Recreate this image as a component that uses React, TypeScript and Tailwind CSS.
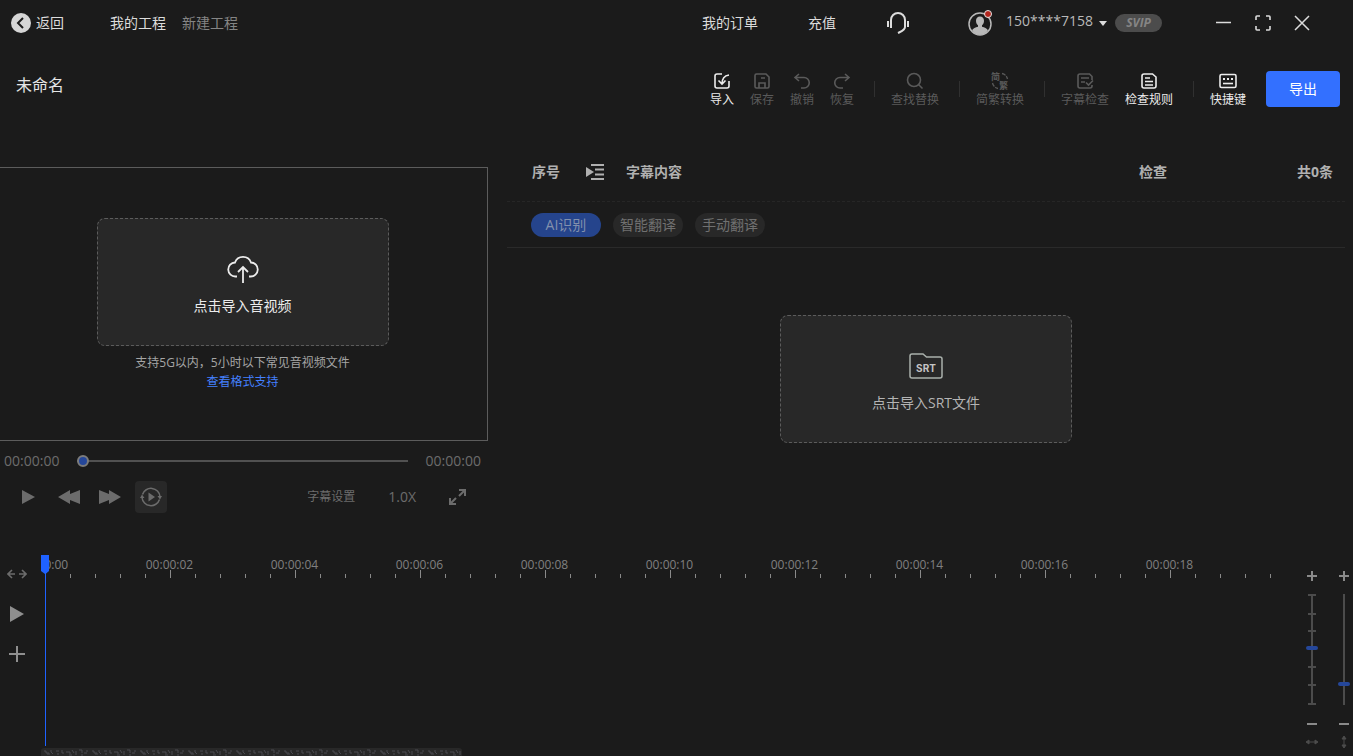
import type { ReactNode } from 'react'
import clsx from 'clsx'

type ToolProps = {
  label: string
  icon: ReactNode
  width?: string
  active?: boolean
}

function Tool({ label, icon, width = 'w-16', active = false }: ToolProps) {
  return (
    <button
      type="button"
      disabled={!active}
      className={clsx(
        'flex flex-col items-center gap-px pt-[3px] text-xs leading-[18px]',
        width,
        active ? 'text-[#ececec]' : 'text-[#5a5a5a]'
      )}
    >
      <svg className="overflow-visible" width="18" height="18" viewBox="0 0 18 18" fill="none" stroke="currentColor" strokeWidth="1.6">
        {icon}
      </svg>
      <span>{label}</span>
    </button>
  )
}

function Divider() {
  return <div className="ml-3 mr-2 h-4 w-px bg-[#303030]" />
}

const importIcon = (
  <>
    <path d="M9 2H4a2 2 0 0 0-2 2v10a2 2 0 0 0 2 2h10a2 2 0 0 0 2-2V9" />
    <path d="M16 3c-4 .5-7 3-7 9M5.500 8.500 9 12l3.500-3.500" />
  </>
)

const saveIcon = (
  <>
    <path d="M3.500 2H13l3 3v9.500a1.500 1.500 0 0 1-1.500 1.500h-11A1.500 1.500 0 0 1 2 14.500v-11A1.500 1.500 0 0 1 3.500 2Z" />
    <path d="M6 16v-5h6v5M8 6h4" />
  </>
)

const undoIcon = <path d="M6 2 2 5.500 6 9M2 5.500h9a5 5 0 0 1 0 10.500H8" />
const redoIcon = <path d="m12 2 4 3.500L12 9M16 5.500H7A5 5 0 0 0 7 16h3" />

const searchIcon = (
  <>
    <circle cx="8" cy="8" r="6.500" />
    <path d="m12.500 12.500 4 4" />
  </>
)

const convertIcon = (
  <>
    <g fill="currentColor" stroke="none" fontSize="9" fontWeight="700" fontFamily="Noto Sans CJK SC, sans-serif">
      <text x="0" y="8">简</text>
      <text x="8" y="17">繁</text>
    </g>
    <path d="M11 1.500a7 7 0 0 1 5.500 5.500M1.500 11A7 7 0 0 0 7 16.500" strokeDasharray="4 1" strokeWidth="1.300" />
  </>
)

const checkIcon = (
  <>
    <path d="M16 8V4.500L13.500 2H4a2 2 0 0 0-2 2v10a2 2 0 0 0 2 2h10a2 2 0 0 0 2-2v-1" />
    <path d="M5 6h8M5 10h4M10 10.500l2.500 2.500L17 8.500" />
  </>
)

const ruleIcon = (
  <>
    <path d="M12.500 2H4a2 2 0 0 0-2 2v10a2 2 0 0 0 2 2h10a2 2 0 0 0 2-2V5Z" />
    <path d="M5 6h5M5 9.500h8M5 13h8" />
  </>
)

const keyboardIcon = (
  <>
    <rect x="1" y="2.500" width="16" height="13" rx="1.500" />
    <path d="M4 7h2M8 7h2M12 7h2" strokeWidth="2" />
    <path d="M4 11.500h10" />
  </>
)

function Header() {
  return (
    <header className="flex h-[46px] items-center pl-[11px] pr-[43px] text-sm text-[#dcdcdc]">
      <button type="button" className="flex items-center gap-[5px]">
        <svg width="20" height="20" viewBox="0 0 20 20">
          <circle cx="10" cy="10" r="10" fill="#d6d6d6" />
          <path d="m12 5-5 5 5 5" fill="none" stroke="#1b1b1b" strokeWidth="2" />
        </svg>
        返回
      </button>
      <nav className="ml-[46px] flex gap-4">
        <a href="#projects">我的工程</a>
        <a href="#new" className="text-[#858585]">新建工程</a>
      </nav>

      <nav className="ml-auto flex items-center gap-[50px]">
        <a href="#orders">我的订单</a>
        <a href="#recharge">充值</a>
        <button type="button" aria-label="客服">
          <svg width="24" height="24" viewBox="0 0 24 24" fill="none" stroke="currentColor" strokeWidth="2">
            <path d="M5 17V9a7 7 0 0 1 14 0v7c0 3-3 4-7 6" />
            <path d="M2 10v6M22 10v6" />
          </svg>
        </button>
      </nav>

      <button type="button" className="ml-[58px] flex items-center text-[#b9b9b9]">
        <svg width="26" height="26" viewBox="0 0 26 26">
          <circle cx="12" cy="14" r="11" fill="none" stroke="#b8b8b8" strokeWidth="1.500" />
          <path
            d="M12 6.500c-2.500 0-4 1.800-4 4.200 0 2 .8 3.600 2 4.500v1.600c-2.600.8-4.800 1.600-6 3.400A10.500 10.500 0 0 0 12 25a10.500 10.500 0 0 0 8-4.800c-1.200-1.800-3.400-2.600-6-3.400v-1.600c1.200-.9 2-2.500 2-4.500 0-2.400-1.500-4.200-4-4.200Z"
            fill="#b8b8b8"
          />
          <circle cx="20" cy="4" r="3.500" fill="#b3261e" stroke="#e4e4e4" />
        </svg>
        <span className="ml-3 pb-1">150****7158</span>
        <svg className="ml-[6px]" width="8" height="6" viewBox="0 0 8 6" fill="#dcdcdc">
          <path d="M0 1h8L4 6Z" />
        </svg>
      </button>
      <span className="ml-2 flex h-[18px] w-[47px] items-center justify-center rounded-full bg-[#4c4c4c] text-xs font-bold italic text-[#858585]">
        SVIP
      </span>

      <div className="ml-[54px] flex items-center gap-[23px]">
        <button type="button" aria-label="最小化">
          <svg width="16" height="16" viewBox="0 0 16 16" stroke="currentColor" strokeWidth="1.500">
            <path d="M0 7.500h15" />
          </svg>
        </button>
        <button type="button" aria-label="全屏">
          <svg width="16" height="16" viewBox="0 0 16 16" fill="none" stroke="currentColor" strokeWidth="1.600">
            <path d="M1 5V2a1 1 0 0 1 1-1h3M11 1h3a1 1 0 0 1 1 1v3M15 11v3a1 1 0 0 1-1 1h-3M5 15H2a1 1 0 0 1-1-1v-3" />
          </svg>
        </button>
        <button type="button" aria-label="关闭">
          <svg width="16" height="16" viewBox="0 0 16 16" stroke="currentColor" strokeWidth="1.500">
            <path d="m1 1 14 14M15 1 1 15" />
          </svg>
        </button>
      </div>
    </header>
  )
}

function Toolbar() {
  return (
    <div className="flex h-[86px] items-center pl-4 pr-[13px]">
      <h1 className="pb-2 text-base text-[#e6e6e6]">未命名</h1>
      <div className="ml-auto flex items-center">
        <Tool label="导入" icon={importIcon} width="w-10" active />
        <Tool label="保存" icon={saveIcon} width="w-10" />
        <Tool label="撤销" icon={undoIcon} width="w-10" />
        <Tool label="恢复" icon={redoIcon} width="w-10" />
        <Divider />
        <Tool label="查找替换" icon={searchIcon} />
        <Divider />
        <Tool label="简繁转换" icon={convertIcon} />
        <Divider />
        <Tool label="字幕检查" icon={checkIcon} />
        <Tool label="检查规则" icon={ruleIcon} active />
        <Divider />
        <Tool label="快捷键" icon={keyboardIcon} width="w-[52px]" active />
      </div>
      <button type="button" className="ml-3 h-9 w-[74px] rounded bg-[#3370ff] text-sm text-white">
        导出
      </button>
    </div>
  )
}

function Player() {
  return (
    <section className="w-[488px] shrink-0 pt-[35px] text-[#6c6c6c]">
      <div className="flex h-[274px] flex-col items-center border border-l-0 border-[#5c5c5c] pr-[2px] pt-[50px]">
        <button
          type="button"
          className="flex h-32 w-[292px] flex-col items-center justify-center gap-3 rounded-lg border border-dashed border-[#5c5c5c] bg-[#282828] pt-1 text-sm text-[#ececec]"
        >
          <svg width="32" height="32" viewBox="0 0 32 32" fill="none" stroke="currentColor" strokeWidth="1.800">
            <path d="M10 24.500H8.500A6.500 6.500 0 0 1 8 10.500 8.500 8.500 0 0 1 24 10.500 6.500 6.500 0 0 1 23.500 24.500H22" />
            <path d="M16 31V15M11 20l5-5 5 5" />
          </svg>
          点击导入音视频
        </button>
        <p className="mt-[7px] text-xs leading-5 text-[#a5a5a5]">支持5G以内，5小时以下常见音视频文件</p>
        <a href="#formats" className="text-xs leading-[18px] text-[#4480ff]">查看格式支持</a>
      </div>

      <div className="flex h-10 items-center gap-[18px] pl-1 pr-[7px] text-sm">
        <span>00:00:00</span>
        <input
          type="range"
          aria-label="播放进度"
          defaultValue={0}
          className="h-3 min-w-0 flex-1 appearance-none bg-transparent [&::-webkit-slider-runnable-track]:h-[2px] [&::-webkit-slider-runnable-track]:bg-[#515151] [&::-webkit-slider-thumb]:-mt-[5px] [&::-webkit-slider-thumb]:size-3 [&::-webkit-slider-thumb]:appearance-none [&::-webkit-slider-thumb]:rounded-full [&::-webkit-slider-thumb]:border-2 [&::-webkit-slider-thumb]:border-[#7c7c7c] [&::-webkit-slider-thumb]:bg-[#25479a]"
        />
        <span>00:00:00</span>
      </div>

      <div className="flex items-center gap-[9px] pl-3 pr-[22px]">
        <button type="button" aria-label="播放" className="flex size-8 items-center justify-center">
          <svg width="13" height="14" viewBox="0 0 13 14" fill="currentColor"><path d="M0 0v14l13-7Z" /></svg>
        </button>
        <button type="button" aria-label="快退" className="flex size-8 items-center justify-center">
          <svg width="22" height="14" viewBox="0 0 22 14" fill="currentColor"><path d="M12 0v4L22 0v14l-10-4v4L0 7Z" /></svg>
        </button>
        <button type="button" aria-label="快进" className="flex size-8 items-center justify-center">
          <svg width="22" height="14" viewBox="0 0 22 14" fill="currentColor"><path d="M10 0v4L0 0v14l10-4v4l12-7Z" /></svg>
        </button>
        <button type="button" aria-label="循环播放" className="flex size-8 items-center justify-center rounded bg-[#282828]">
          <svg width="22" height="22" viewBox="0 0 22 22" fill="currentColor">
            <path d="M2.500 8.500a9 9 0 0 1 17.500 2M19.500 13.500a9 9 0 0 1-17.500-2" fill="none" stroke="currentColor" strokeWidth="1.500" />
            <path d="M17.500 10H22l-2 3.500ZM0 12h4.500L2 8.500ZM8.500 6.500v9L15 11Z" />
          </svg>
        </button>
        <div className="ml-auto flex items-center gap-[33px]">
          <button type="button" className="text-xs">字幕设置</button>
          <button type="button" className="text-sm">1.0X</button>
          <button type="button" aria-label="全屏播放">
            <svg width="17" height="16" viewBox="0 0 17 16" fill="none" stroke="currentColor" strokeWidth="2">
              <path d="M10 1h6v6M16 1l-6 6M7 15H1V9M1 15l6-6" />
            </svg>
          </button>
        </div>
      </div>
    </section>
  )
}

function SubtitlePanel() {
  return (
    <section className="ml-[19px] mr-2 flex-1 pt-[10px]">
      <div className="flex h-[60px] items-center border-b border-dashed border-[#262626] pl-[25px] pr-3 text-sm font-bold text-[#b0b0b0]">
        <span>序号</span>
        <button type="button" aria-label="展开列表" className="ml-[26px]">
          <svg width="18" height="18" viewBox="0 0 18 18" fill="currentColor">
            <path d="M0 4v10L8 9Z" />
            <path d="M5 2h13M9 6.500h9M9 11.500h9M5 16h13" stroke="currentColor" strokeWidth="2" />
          </svg>
        </button>
        <span className="ml-[22px]">字幕内容</span>
        <span className="ml-auto mr-[130px]">检查</span>
        <span>共0条</span>
      </div>
      <div className="flex h-[46px] items-center gap-3 border-b border-[#2a2a2a] pl-6 text-sm text-[#707070]">
        <button type="button" className="h-6 w-[70px] rounded-full bg-[#25448c] text-[#8290ad]">AI识别</button>
        <button type="button" className="h-6 w-[70px] rounded-full bg-[#282828]">智能翻译</button>
        <button type="button" className="h-6 w-[70px] rounded-full bg-[#282828]">手动翻译</button>
      </div>
      <div className="flex justify-center pt-[67px]">
        <button
          type="button"
          className="flex h-32 w-[292px] flex-col items-center justify-center gap-[14px] rounded-lg border border-dashed border-[#5c5c5c] bg-[#282828] pt-2 text-sm text-[#b4b4b4]"
        >
          <svg width="34" height="26" viewBox="0 0 34 26">
            <path
              d="M3 1h11l3.500 3H31a2 2 0 0 1 2 2v17a2 2 0 0 1-2 2H3a2 2 0 0 1-2-2V3a2 2 0 0 1 2-2Z"
              fill="none"
              stroke="#a9b0ab"
              strokeWidth="1.500"
            />
            <text x="17" y="19" textAnchor="middle" fontSize="10" fontWeight="700" fontFamily="Inter, sans-serif" fill="#c4c4c4">
              SRT
            </text>
          </svg>
          点击导入SRT文件
        </button>
      </div>
    </section>
  )
}

const seconds = ['00', '02', '04', '06', '08', '10', '12', '14', '16', '18']
const ticks = Array.from({ length: 50 }, (_, i) => i)

function ZoomSlider({ label, value, marks, icon }: { label: string; value: number; marks?: boolean; icon: ReactNode }) {
  return (
    <div className="flex w-4 flex-col items-center text-[#8a8a8a]">
      <button type="button" aria-label={`${label}放大`}>
        <svg width="16" height="16" viewBox="0 0 16 16" stroke="currentColor" strokeWidth="2">
          <path d="M3 8h10M8 3v10" />
        </svg>
      </button>
      <div className="mt-[10px] grid justify-items-center">
        <svg className="[grid-area:1/1]" width="12" height="111" viewBox="0 0 12 111" stroke="#4c4c4c" strokeWidth="2">
          <path d="M6 0v111" />
          {marks && <path d="M2 1h8M2 20h8M2 37h8M2 73h8M2 91h8M2 110h8" />}
        </svg>
        <input
          type="range"
          aria-label={label}
          defaultValue={value}
          className="h-[111px] w-3 appearance-none bg-transparent [direction:rtl] [grid-area:1/1] [writing-mode:vertical-lr] [&::-webkit-slider-thumb]:h-1 [&::-webkit-slider-thumb]:w-3 [&::-webkit-slider-thumb]:appearance-none [&::-webkit-slider-thumb]:rounded-sm [&::-webkit-slider-thumb]:bg-[#25479a]"
        />
      </div>
      <button type="button" aria-label={`${label}缩小`} className="mt-[11px]">
        <svg width="16" height="16" viewBox="0 0 16 16" stroke="currentColor" strokeWidth="2">
          <path d="M3 8h10" />
        </svg>
      </button>
      <svg className="mt-[2px]" width="16" height="16" viewBox="0 0 16 16" fill="#4c4c4c" stroke="#4c4c4c">
        {icon}
      </svg>
    </div>
  )
}

function Timeline() {
  return (
    <section className="mt-8 flex flex-1">
      <div className="mr-[7px] flex w-[34px] flex-col items-center pt-[9px] text-[#8f8f8f]">
        <button type="button" aria-label="适应宽度" className="flex h-10 items-center">
          <svg width="20" height="10" viewBox="0 0 20 10" fill="none" stroke="#6c6c6c" strokeWidth="1.600">
            <path d="M5 1 1 5l4 4M1 5h7M15 1l4 4-4 4M19 5h-7" />
          </svg>
        </button>
        <button type="button" aria-label="播放时间轴" className="flex h-10 items-center">
          <svg width="14" height="16" viewBox="0 0 14 16" fill="currentColor"><path d="M0 0v16l14-8Z" /></svg>
        </button>
        <button type="button" aria-label="添加" className="flex h-10 items-center">
          <svg width="16" height="16" viewBox="0 0 16 16" stroke="currentColor" strokeWidth="2">
            <path d="M0 8h16M8 0v16" />
          </svg>
        </button>
      </div>

      <div className="relative flex min-w-0 flex-1 flex-col overflow-hidden pt-[14px]">
        <div className="-ml-[59px] flex h-[11px] text-xs leading-3 text-[#808080]">
          {seconds.map((s) => (
            <span key={s} className="w-[125px] shrink-0 text-center">00:00:{s}</span>
          ))}
        </div>
        <div className="flex h-2 items-end pl-1">
          {ticks.map((i) => (
            <span
              key={i}
              className={clsx('w-[25px] shrink-0 border-l border-[#8a8a8a]', i % 5 === 0 ? 'h-2' : 'h-1')}
            />
          ))}
        </div>
        <div className="absolute bottom-[10px] left-0 top-[10px] flex w-[9px] flex-col items-center">
          <svg width="9" height="19" viewBox="0 0 9 19" fill="#1f62ff" className="shrink-0">
            <path d="M0 0h8v16l-3.500 3h-.500L0 16Z" />
          </svg>
          <div className="w-px flex-1 bg-[#1f62ff]" />
        </div>
        <svg className="mt-auto h-2 w-1/3" aria-hidden="true">
          <defs>
            <pattern id="grain" width="48" height="8" patternUnits="userSpaceOnUse">
              <path
                d="M3 3h2v2h3M10 2v2l2 2M15 3h3M17 5v2M21 2v3h2M25 4h4v2M31 2l2 3M35 3v4M38 2h3v3M43 5h3M46 2v2M6 6h3M28 7h3M40 7h2"
                fill="none"
                stroke="#4a4a50"
              />
            </pattern>
          </defs>
          <rect width="100%" height="12" rx="3" fill="#282828" />
          <rect width="100%" height="8" fill="url(#grain)" />
        </svg>
      </div>

      <div className="flex gap-4 pr-px pt-[23px]">
        <ZoomSlider label="时间缩放" value={51} marks icon={<path d="M3 8h10M5 6 2 8l3 2ZM11 6l3 2-3 2Z" />} />
        <ZoomSlider label="波形缩放" value={18} icon={<path d="M8 3v10M6 5l2-3 2 3ZM6 11l2 3 2-3Z" />} />
      </div>
    </section>
  )
}

export default function App() {
  return (
    <div className="flex min-h-screen flex-col bg-[#1b1b1b] font-['Open_Sans','Noto_Sans_CJK_SC',sans-serif]">
      <Header />
      <Toolbar />
      <main className="flex">
        <Player />
        <SubtitlePanel />
      </main>
      <Timeline />
    </div>
  )
}
